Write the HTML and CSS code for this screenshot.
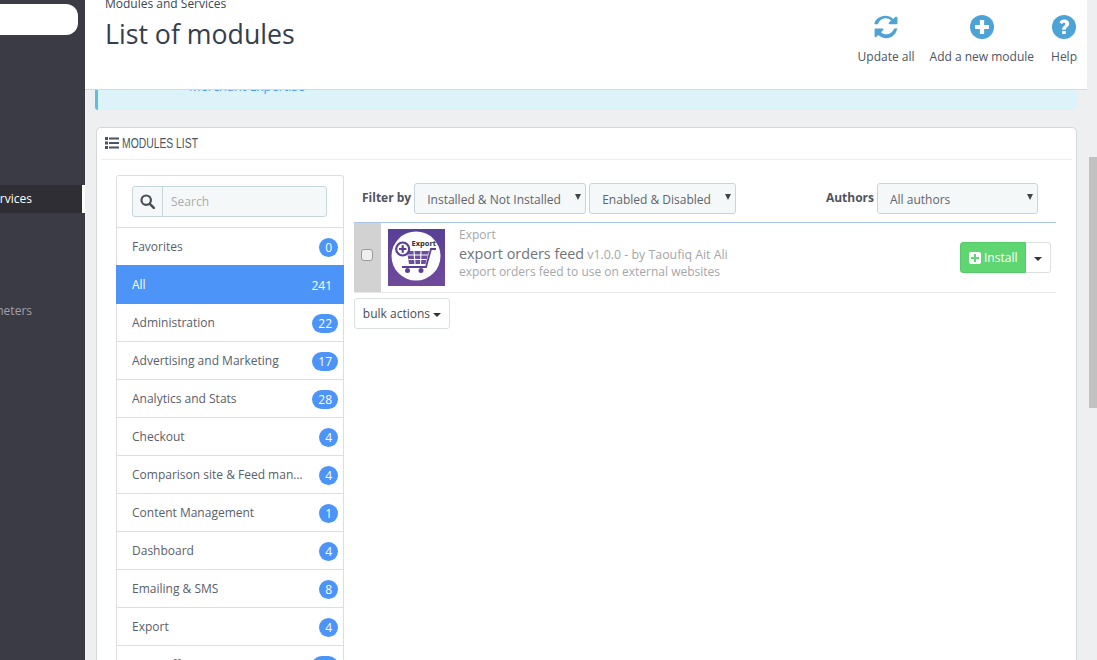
FILE: index.html
```html
<!DOCTYPE html>
<html lang="en">
<head>
    <meta charset="UTF-8">
    <meta name="viewport" content="width=device-width, initial-scale=1.0">
    <title>List of modules</title>
    <link rel="stylesheet" href="styles.css">
</head>
<body>
    <div class="page">
        <aside class="sidebar">
            <div class="side-search"></div>
            <div class="side-item side-active"><span>Modules and Services</span></div>
            <div class="side-item side-params"><span>Advanced Parameters</span></div>
        </aside>

        <main class="main">
            <header class="page-head">
                <div class="head-titles">
                    <div class="crumb">Modules and Services</div>
                    <h1>List of modules</h1>
                </div>
                <div class="toolbar">
                    <a class="tool tool-update">
                        <svg viewBox="0 0 28 28"><path fill="#4da3d6" d="M26.900 16.400c-1.200 6.300-6.300 10.600-12.800 10.600-3.400 0-6.700-1.300-9.200-3.600l-2.300 2.300c-.2.200-.5.300-.8.300-.6 0-1.100-.5-1.100-1.100v-8.100c0-.6.500-1.100 1.100-1.100h8.100c.6 0 1.100.5 1.100 1.100 0 .3-.1.600-.3.800l-2.500 2.500c1.700 1.600 4 2.500 6.300 2.500 3.200 0 6.200-1.700 7.800-4.400.4-.7.600-1.300.9-2 .1-.3.300-.5.600-.5h3.600c.4 0 .6.300.5.600zM27.400 1.500v8.100c0 .6-.5 1.100-1.100 1.100h-8.100c-.6 0-1.100-.5-1.100-1.100 0-.3.100-.6.300-.8l2.500-2.500c-1.700-1.600-4-2.500-6.300-2.500-3.200 0-6.200 1.700-7.800 4.400-.4.700-.6 1.300-.9 2-.1.300-.3.500-.6.500H.9c-.4 0-.6-.3-.5-.6C1.600 5.300 6.800 1 13.200 1c3.400 0 6.700 1.300 9.200 3.600l2.300-2.300c.2-.2.500-.3.800-.3.600 0 1.900.5 1.900 1.100z"/></svg>
                        <span>Update all</span>
                    </a>
                    <a class="tool tool-add">
                        <svg viewBox="0 0 26 26"><circle cx="13" cy="13" r="13" fill="#4da3d6"/><path fill="#fff" d="M10.700 5.500h4.600v5.200h5.200v4.600h-5.200v5.200h-4.600v-5.200H5.500v-4.600h5.200z"/></svg>
                        <span>Add a new module</span>
                    </a>
                    <a class="tool tool-help">
                        <svg viewBox="0 0 26 26"><circle cx="13" cy="13" r="13" fill="#4da3d6"/><path fill="#fff" d="M11 17.300h3.900v3.400H11zM13.200 5c3 0 5.400 1.800 5.400 4.500 0 3.500-3.700 3.800-3.700 6.500H11c0-4 3.500-4.300 3.500-6.200 0-.9-.6-1.400-1.500-1.400-1 0-1.700.7-2.300 1.500L8.200 7.900C9.300 6 11 5 13.200 5z"/></svg>
                        <span>Help</span>
                    </a>
                </div>
            </header>

            <div class="alert"><a>Merchant Expertise</a></div>

            <section class="panel">
                <div class="panel-heading">
                    <svg width="14" height="12" viewBox="0 0 14 12"><path fill="#4a5560" d="M0 0h3v3H0zM0 4.500h3v3H0zM0 9h3v3H0zM4 .5h10v2H4zM4 5h10v2H4zM4 9.500h10v2H4z"/></svg>
                    <span class="heading-text">MODULES LIST</span>
                </div>
                <div class="panel-body">
                    <div class="cats">
                        <div class="cat-search">
                            <div class="search-group">
                                <span class="search-icon">
                                    <svg width="15" height="15" viewBox="0 0 15 15"><circle cx="6.200" cy="6.200" r="4.700" fill="none" stroke="#4a4f55" stroke-width="2.200"/><path d="M9.800 9.800l4 4" stroke="#4a4f55" stroke-width="2.600" stroke-linecap="round"/></svg>
                                </span>
                                <span class="search-input">Search</span>
                            </div>
                        </div>
                        <div class="cat"><span class="cat-name">Favorites</span><span class="badge">0</span></div>
                        <div class="cat cat-active"><span class="cat-name">All</span><span class="badge">241</span></div>
                        <div class="cat"><span class="cat-name">Administration</span><span class="badge">22</span></div>
                        <div class="cat"><span class="cat-name">Advertising and Marketing</span><span class="badge">17</span></div>
                        <div class="cat"><span class="cat-name">Analytics and Stats</span><span class="badge">28</span></div>
                        <div class="cat"><span class="cat-name">Checkout</span><span class="badge">4</span></div>
                        <div class="cat"><span class="cat-name">Comparison site &amp; Feed management</span><span class="badge">4</span></div>
                        <div class="cat"><span class="cat-name">Content Management</span><span class="badge">1</span></div>
                        <div class="cat"><span class="cat-name">Dashboard</span><span class="badge">4</span></div>
                        <div class="cat"><span class="cat-name">Emailing &amp; SMS</span><span class="badge">8</span></div>
                        <div class="cat"><span class="cat-name">Export</span><span class="badge">4</span></div>
                        <div class="cat"><span class="cat-name">Front office Features</span><span class="badge">38</span></div>
                    </div>

                    <div class="modules">
                        <div class="filters">
                            <div class="filter-left">
                                <label>Filter by</label>
                                <div class="select select-install">Installed &amp; Not Installed</div>
                                <div class="select select-enable">Enabled &amp; Disabled</div>
                            </div>
                            <div class="filter-right">
                                <label>Authors</label>
                                <div class="select select-author">All authors</div>
                            </div>
                        </div>

                        <div class="module-row">
                            <div class="check-cell"><span class="checkbox"></span></div>
                            <svg class="module-logo" width="57" height="57" viewBox="0 0 57 57">
                                <defs>
                                    <linearGradient id="logoBg" x1="0" y1="0" x2="0" y2="1">
                                        <stop offset="0" stop-color="#593f97"/>
                                        <stop offset="1" stop-color="#6f4a9b"/>
                                    </linearGradient>
                                </defs>
                                <rect width="57" height="57" fill="url(#logoBg)"/>
                                <circle cx="28" cy="27" r="24.500" fill="#fff"/>
                                <text x="23.500" y="16.500" class="logo-text">Export</text>
                                <path d="M48 20H43l-5 18H14" fill="none" stroke="#5a4098" stroke-width="1.800"/>
                                <path d="M19 22h22l-3.500 13H21z" fill="#6a4f9f"/>
                                <path d="M20 26h20M20.500 30.500h18M26 22l1 13M33 22l-.5 13" stroke="#fff" stroke-width="1.100"/>
                                <circle cx="19.500" cy="41.500" r="2.500" fill="#5a4098"/>
                                <circle cx="33" cy="41.500" r="2.500" fill="#5a4098"/>
                                <circle cx="14.700" cy="20" r="6.500" fill="#fff" stroke="#5a4098" stroke-width="2.200"/>
                                <path d="M14.700 16.300v7.400M11 20h7.400" stroke="#5a4098" stroke-width="2.200"/>
                            </svg>
                            <div class="module-info">
                                <div class="module-cat">Export</div>
                                <div class="module-title"><span class="module-name">export orders feed</span> v1.0.0 - by Taoufiq Ait Ali</div>
                                <div class="module-desc">export orders feed to use on external websites</div>
                            </div>
                            <div class="install-group">
                                <button class="btn-install">
                                    <svg width="12" height="12" viewBox="0 0 12 12"><rect width="12" height="12" rx="2" fill="#fff"/><path d="M5 2h2v3h3v2H7v3H5V7H2V5h3z" fill="#5fd672"/></svg>
                                    Install
                                </button>
                                <button class="btn-caret"><span class="caret"></span></button>
                            </div>
                        </div>

                        <button class="btn-bulk">bulk actions <span class="caret"></span></button>
                    </div>
                </div>
            </section>
        </main>
    </div>
    <div class="scroll-thumb"></div>
</body>
</html>
```

FILE: styles.css
```css
* {
    box-sizing: border-box;
}

html, body {
    height: 660px;
    margin: 0;
    overflow: hidden;
}

body {
    background-color: #eeeff1;
    color: #555;
    font-family: 'Open Sans', sans-serif;
    font-size: 12px;
}

.page {
    display: grid;
    grid-template-columns: 85px 1fr;
    height: 660px;
}

/* sidebar, only the right end of it is on screen */
.sidebar {
    background-color: #3b3b46;
    overflow: hidden;
    display: flex;
    flex-direction: column;
    align-items: stretch;
}

.side-search {
    height: 31px;
    margin: 4px 7px 0 -20px;
    background-color: #fff;
    border-radius: 12px;
}

.side-item {
    display: flex;
    justify-content: flex-end;
    align-items: center;
    white-space: nowrap;
    padding: 0 53px 2px 0;
    height: 28px;
}

.side-active {
    margin-top: 150px;
    background-color: #2e2e34;
    border-right: 3px solid #fff;
    padding-right: 50px;
    color: #fff;
}

.side-params {
    margin-top: 84px;
    color: #a0a0a8;
}

.main {
    min-width: 0;
    overflow: hidden;
}

.page-head {
    position: relative;
    z-index: 2;
    height: 90px;
    margin-right: 10px;
    background-color: #fff;
    border-bottom: 1px solid #d6dadd;
    display: flex;
    justify-content: space-between;
    padding: 0 10px 0 20px;
}

.crumb {
    margin-top: -4px;
    font-size: 12px;
    line-height: 16px;
    color: #3c4654;
}

h1 {
    margin: 4px 0 0;
    font-size: 26.700px;
    font-weight: 400;
    line-height: 36px;
    color: #363e4b;
}

.toolbar {
    display: flex;
    align-items: flex-start;
    padding-top: 15px;
}

.tool {
    display: flex;
    flex-direction: column;
    align-items: center;
    gap: 10px;
    font-size: 12px;
    line-height: 16px;
    color: #4b5563;
}

.tool svg {
    display: block;
    width: 24px;
    height: 24px;
}

.tool-add {
    margin-left: 15px;
}

.tool-help {
    margin-left: 17px;
}

.alert {
    height: 41px;
    margin: -21px 19px 0 10px;
    padding: 9px 0 0 91px;
    background-color: #dcf3f9;
    border-left: 3px solid #5bc0de;
    border-radius: 3px;
    color: #4c94f8;
    font-size: 12.800px;
    line-height: 16px;
}

.panel {
    margin: 17px 20px 0 11px;
    height: 700px;
    background-color: #fff;
    border: 1px solid #d3d8db;
    border-radius: 5px;
    padding: 0 4px;
}

.panel-heading {
    display: flex;
    align-items: center;
    gap: 3px;
    height: 32px;
    padding: 0 0 2px 4px;
    border-bottom: 1px solid #eeeeee;
    color: #4a5560;
}

.heading-text {
    display: inline-block;
    font-family: 'Liberation Sans', sans-serif;
    font-size: 14px;
    transform: scaleX(.74);
    transform-origin: left center;
}

.panel-body {
    display: flex;
    align-items: flex-start;
    padding: 15px 16px 0 15px;
}

.cats {
    width: 228px;
    flex: none;
    border: 1px solid #dcdfe2;
    border-bottom: 0;
    border-radius: 3px 3px 0 0;
}

.cat-search {
    height: 52px;
    padding: 10px 15px 0;
    border-bottom: 1px solid #dcdfe2;
}

.search-group {
    display: flex;
    width: 195px;
    height: 31px;
    background-color: #f5f8f9;
    border: 1px solid #c7d6db;
    border-radius: 3px;
}

.search-icon {
    width: 30px;
    display: flex;
    align-items: center;
    justify-content: center;
    border-right: 1px solid #c7d6db;
}

.search-input {
    padding-left: 8px;
    line-height: 29px;
    color: #a9acae;
}

.cat {
    display: flex;
    align-items: center;
    justify-content: space-between;
    height: 38px;
    padding: 0 5px 0 15px;
    border-bottom: 1px solid #dcdfe2;
    color: #58606b;
}

.cat-name {
    white-space: nowrap;
    overflow: hidden;
    text-overflow: ellipsis;
    max-width: 172px;
}

.badge {
    min-width: 18px;
    height: 19px;
    padding: 0 6px;
    margin-top: 2px;
    border-radius: 10px;
    background-color: #4c94f8;
    color: #fff;
    text-align: center;
    line-height: 19px;
    font-size: 12px;
}

.cat-active {
    background-color: #4c94f8;
    color: #fff;
    height: 39px;
    margin: -1px -1px 0 -1px;
    padding: 0 6px 0 16px;
    border-bottom: 0;
}

.modules {
    flex: 1;
    min-width: 0;
    margin-left: 10px;
}

.filters {
    display: flex;
    justify-content: space-between;
    height: 48px;
    padding: 8px 18px 0 8px;
    border-bottom: 1px solid #a8c6ea;
}

.filter-left,
.filter-right {
    display: flex;
    align-items: flex-start;
}

.filters label {
    margin-right: 3px;
    font-weight: 700;
    line-height: 29px;
    color: #4f5560;
}

.select {
    position: relative;
    height: 31px;
    padding-left: 12px;
    background-color: #f5f8f9;
    border: 1px solid #c7d6db;
    border-radius: 3px;
    line-height: 31px;
    color: #5c6570;
}

.select::after {
    content: "";
    position: absolute;
    top: 10px;
    right: 4px;
    border-top: 6px solid #444;
    border-left: 3px solid transparent;
    border-right: 3px solid transparent;
}

.select-install {
    width: 172px;
}

.select-enable {
    width: 147px;
    margin-left: 3px;
}

.select-author {
    width: 161px;
}

.module-row {
    display: flex;
    align-items: center;
    height: 70px;
    border-bottom: 1px solid #e8e8e8;
}

.check-cell {
    width: 27px;
    height: 100%;
    padding: 0 1px 6px 0;
    display: flex;
    align-items: center;
    justify-content: center;
    background-color: #d2d2d2;
    flex: none;
}

.checkbox {
    width: 12px;
    height: 12px;
    background-color: #efefef;
    border: 1px solid #9a9a9a;
    border-radius: 3px;
}

.module-logo {
    flex: none;
    margin-left: 7px;
}

.logo-text {
    font-family: 'Open Sans', sans-serif;
    font-size: 7.500px;
    font-weight: 700;
    fill: #333;
}

.module-info {
    flex: 1;
    margin-left: 14px;
    padding-bottom: 9px;
    color: #a3a7ab;
    line-height: 18px;
}

.module-title {
    margin: 1px 0 -1px;
    font-size: 12.350px;
}

.module-name {
    font-size: 14.350px;
    color: #6e747a;
}

.install-group {
    display: flex;
    margin-right: 5px;
}

button {
    font-family: 'Open Sans', sans-serif;
    font-size: 12px;
    cursor: pointer;
}

.btn-install {
    display: flex;
    align-items: center;
    gap: 3px;
    height: 31px;
    width: 66px;
    padding: 0 0 0 8px;
    background-color: #5fd672;
    color: #fff;
    border: 1px solid #56c968;
    border-radius: 3px 0 0 3px;
}

.btn-caret {
    width: 25px;
    height: 31px;
    padding: 0;
    background-color: #fff;
    border: 1px solid #dcdfe2;
    border-left: 0;
    border-radius: 0 3px 3px 0;
}

.caret {
    display: inline-block;
    vertical-align: middle;
    border-top: 4px solid #333;
    border-left: 4px solid transparent;
    border-right: 4px solid transparent;
}

.btn-bulk {
    display: block;
    width: 96px;
    height: 31px;
    margin-top: 5px;
    padding: 0;
    background-color: #fff;
    border: 1px solid #dcdfe2;
    border-radius: 3px;
    color: #444d58;
}

/* page scrollbar thumb */
.scroll-thumb {
    position: absolute;
    top: 157px;
    left: 1089px;
    width: 8px;
    height: 251px;
    background-color: #c1c1c1;
}
```
